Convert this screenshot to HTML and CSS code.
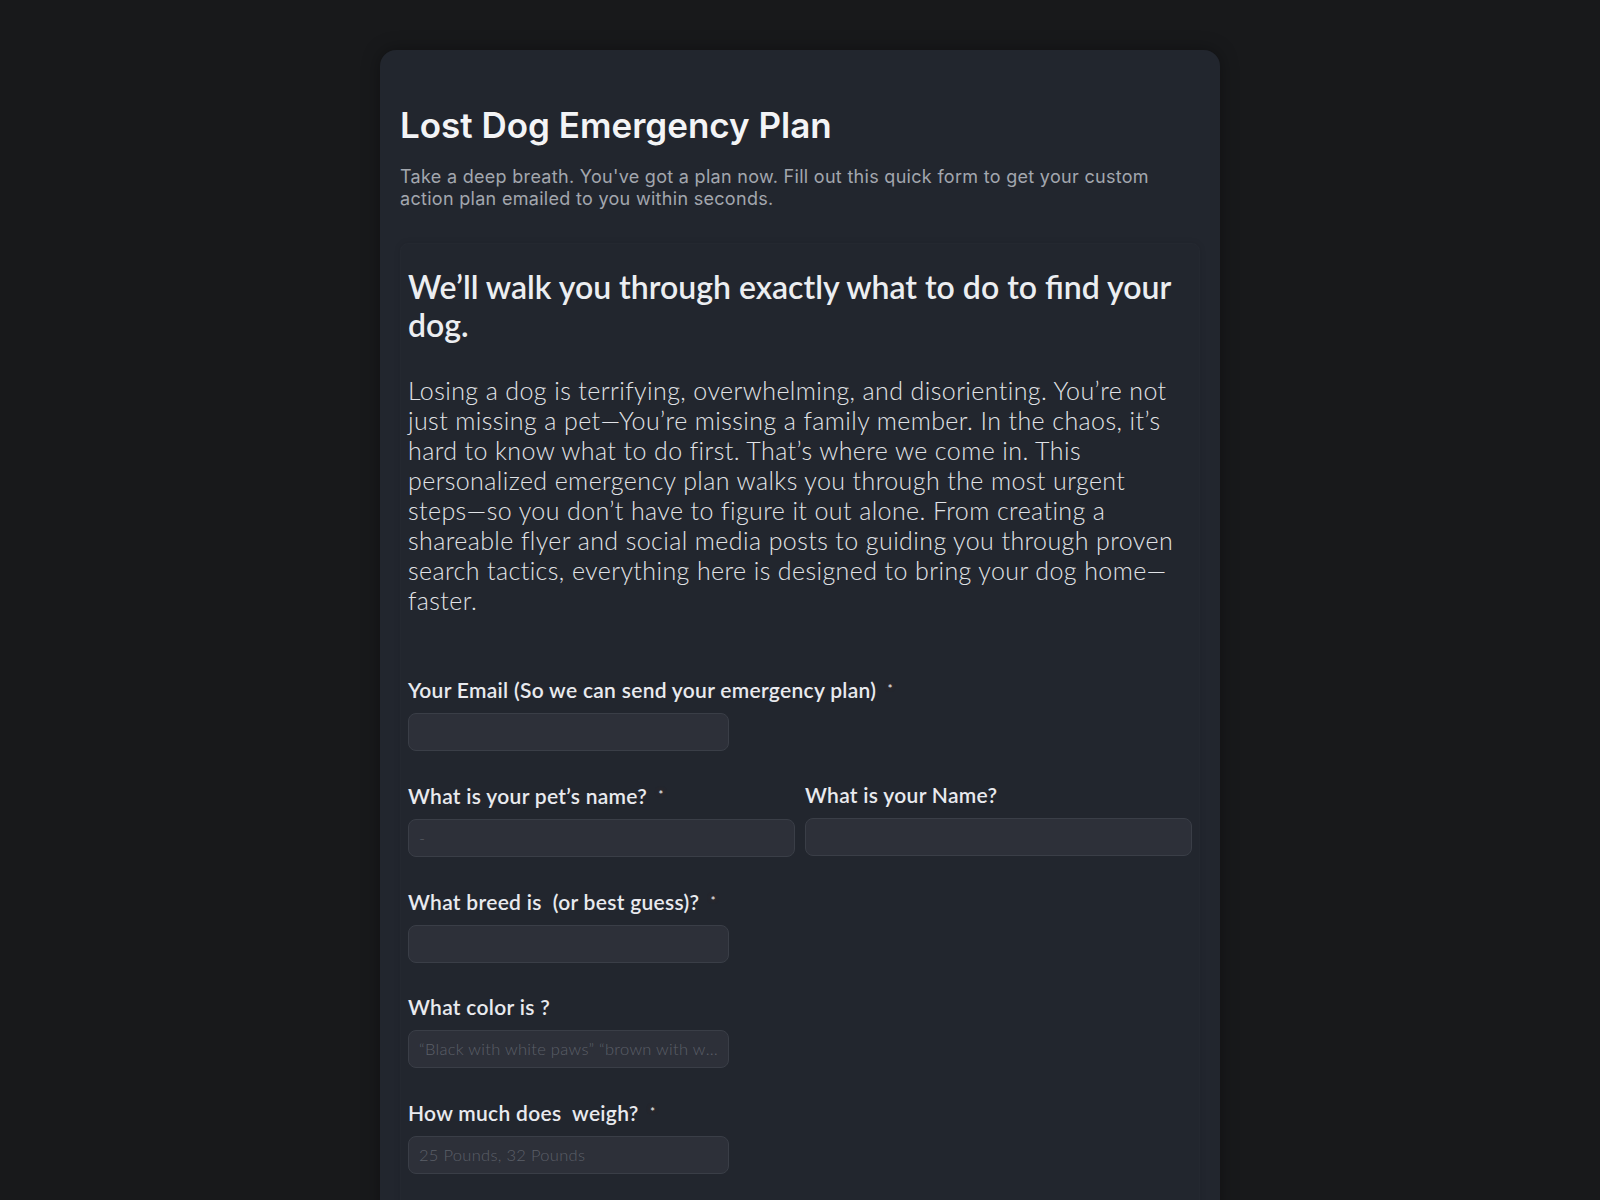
FILE: index.html
```html
<!DOCTYPE html>
<html lang="en">

<head>
    <meta charset="UTF-8">
    <meta name="viewport" content="width=device-width, initial-scale=1.0">
    <title>Lost Dog Emergency Plan</title>
    <link rel="stylesheet" href="styles.css">
</head>

<body>
    <div class="card">
        <h1>Lost Dog Emergency Plan</h1>
        <p class="subtitle">Take a deep breath. You've got a plan now. Fill out this quick form to get your custom action plan emailed to you within seconds.</p>

        <div class="form-box">
            <h2>We’ll walk you through exactly what to do to find your dog.</h2>
            <p class="intro">Losing a dog is terrifying, overwhelming, and disorienting. You’re not just missing a pet—You’re missing a family member. In the chaos, it’s hard to know what to do first. That’s where we come in. This personalized emergency plan walks you through the most urgent steps&#8288;—&#8288;so you don’t have to figure it out alone. From creating a shareable flyer and social media posts to guiding you through proven search tactics, everything here is designed to bring your dog home—faster.</p>

            <form class="fields">
                <div class="field">
                    <label for="email">Your Email (So we can send your emergency plan) <span class="req">*</span></label>
                    <input type="email" id="email" class="short">
                </div>

                <div class="row">
                    <div class="field">
                        <label for="pet-name">What is your pet’s name? <span class="req">*</span></label>
                        <input type="text" id="pet-name" placeholder="-">
                    </div>
                    <div class="field">
                        <label for="owner-name">What is your Name?</label>
                        <input type="text" id="owner-name">
                    </div>
                </div>

                <div class="field">
                    <label for="breed">What breed is &nbsp;(or best guess)? <span class="req">*</span></label>
                    <input type="text" id="breed" class="short">
                </div>

                <div class="field">
                    <label for="color">What color is ?</label>
                    <input type="text" id="color" class="short" placeholder="“Black with white paws” “brown with white chest”">
                </div>

                <div class="field">
                    <label for="weight">How much does &nbsp;weigh? <span class="req">*</span></label>
                    <input type="text" id="weight" class="short" placeholder="25 Pounds, 32 Pounds">
                </div>
            </form>
        </div>
    </div>
</body>

</html>
```

FILE: styles.css
```css
body {
    margin: 0;
    padding-top: 50px;
    background-color: #18191b;
    font-family: 'Lato', sans-serif;
    color: #e8e9ec;
}

.card {
    width: 800px;
    margin: 0 auto;
    padding: 53px 20px 120px;
    background-color: #22262e;
    border-radius: 16px;
    box-shadow: 0 0 18px rgba(0, 0, 0, 0.35);
}

h1 {
    font-family: 'Inter', sans-serif;
    font-size: 35px;
    line-height: 44px;
    font-weight: 600;
    color: #f3f4f6;
    margin: 0;
}

.subtitle {
    font-family: 'Inter', sans-serif;
    font-size: 18px;
    line-height: 21.5px;
    letter-spacing: 0.3px;
    color: #a3a7ae;
    margin: 19px 0 0;
}

.form-box {
    margin-top: 34px;
    padding: 24px 7px 40px;
    border-radius: 8px;
    border: 1px solid rgba(255, 255, 255, 0.012);
    box-shadow: 0 0 6px rgba(0, 0, 0, 0.1);
}

h2 {
    font-size: 32px;
    line-height: 38px;
    font-weight: 600;
    color: #eceef1;
    margin: 0;
}

.intro {
    font-size: 25px;
    line-height: 30px;
    letter-spacing: 0.4px;
    font-weight: 300;
    color: #e1e3e7;
    margin: 31px 0 62px;
}

.fields {
    display: flex;
    flex-direction: column;
    gap: 32px;
}

.row {
    display: grid;
    grid-template-columns: 1fr 1fr;
    gap: 10px;
}

.field {
    display: flex;
    flex-direction: column;
    gap: 11px;
}

label {
    font-size: 21px;
    line-height: 24px;
    letter-spacing: 0.3px;
    font-weight: 600;
    color: #e9eaee;
}

.req {
    font-size: 11px;
    vertical-align: 5px;
    margin-left: 6px;
    color: #e6e6e6;
    text-shadow: 0 0 4px #5a2a1a;
}

input {
    box-sizing: border-box;
    width: 100%;
    height: 38px;
    padding: 0 10px;
    background-color: #2d3039;
    border: 1px solid #3a3e47;
    border-radius: 8px;
    font-family: 'Lato', sans-serif;
    font-size: 16.5px;
    letter-spacing: 0.3px;
    font-weight: 300;
    color: #e8e9ec;
    text-overflow: ellipsis;
    outline: none;
}

input.short {
    width: 321px;
}

input::placeholder {
    color: #5b5f68;
}
```
